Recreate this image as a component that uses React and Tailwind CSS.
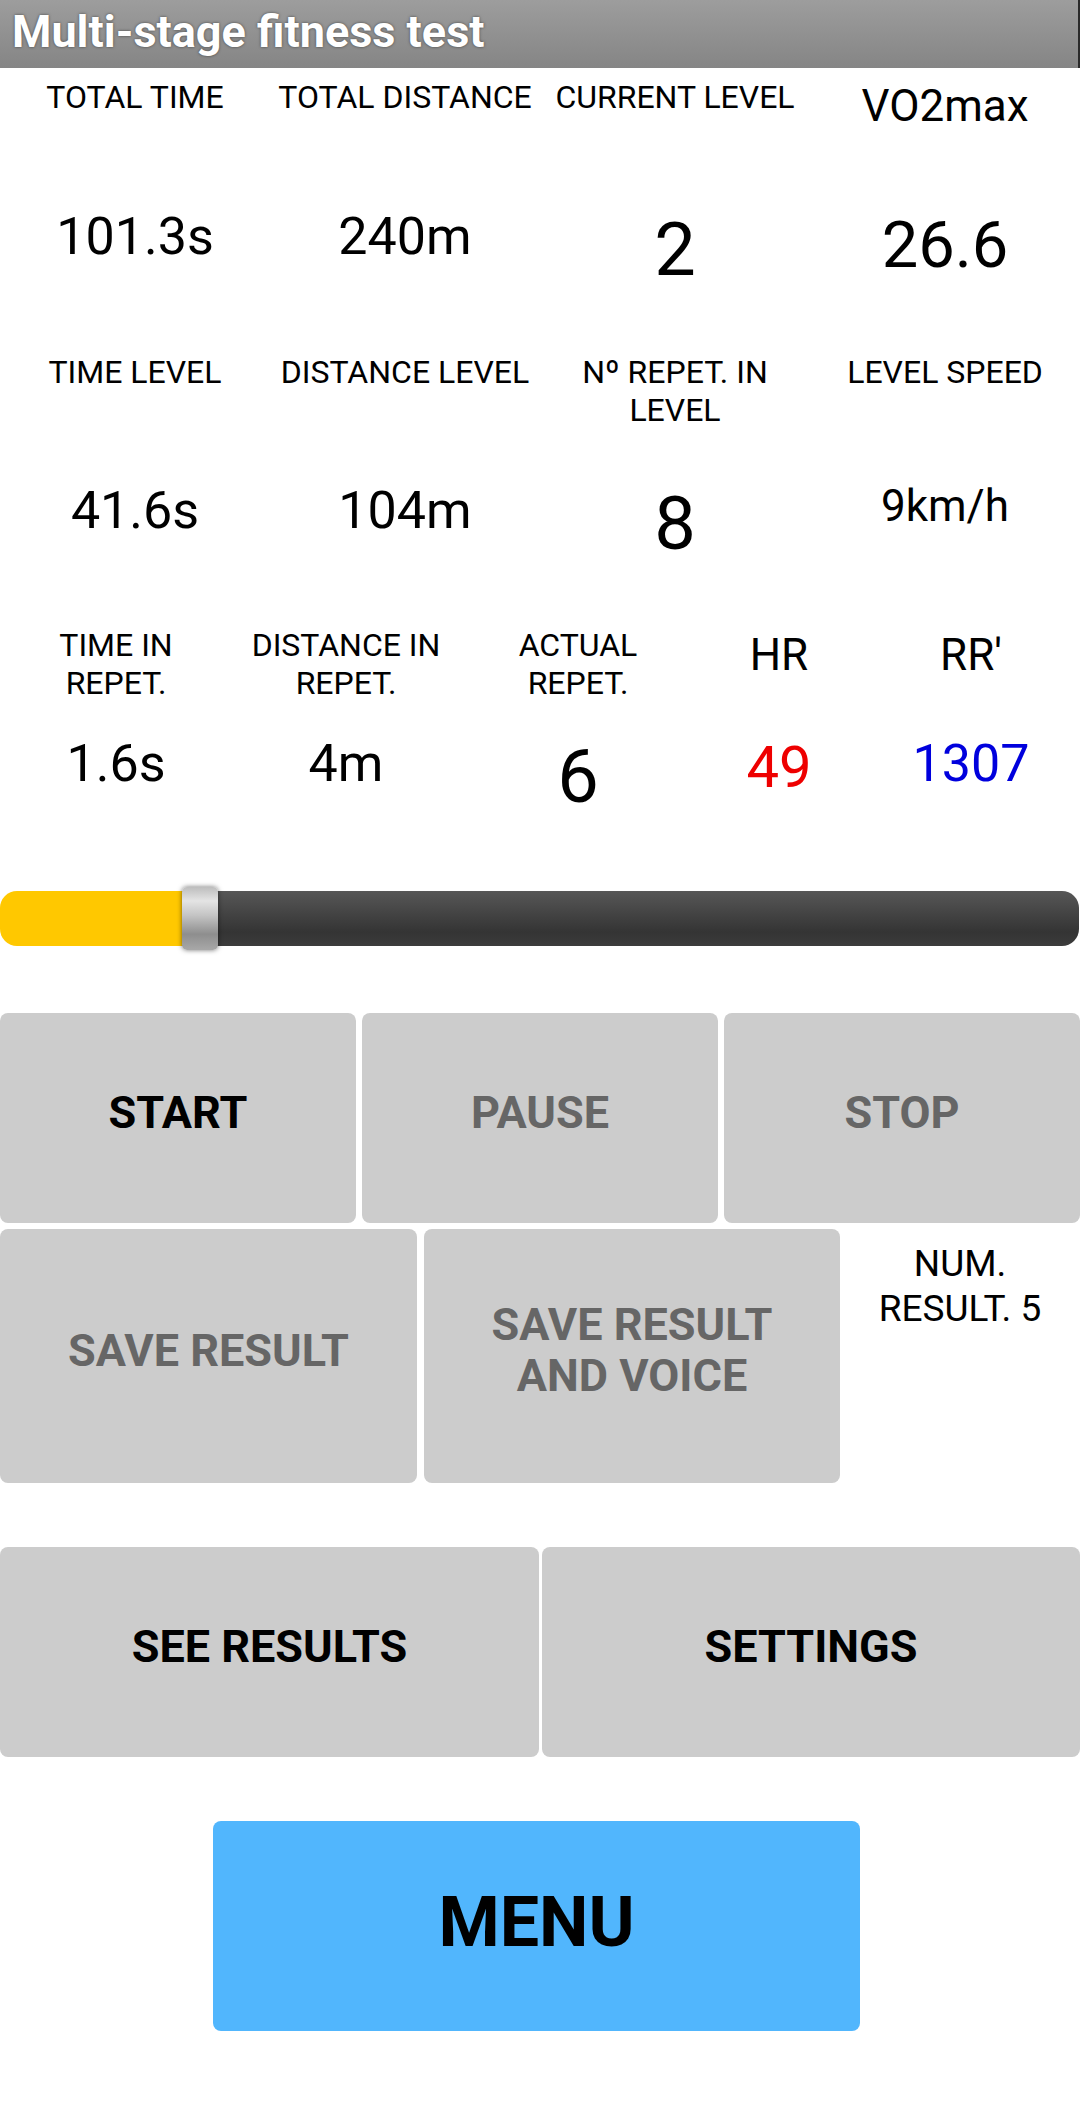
import React from "react";

const LBL = "text-[32px] leading-[38px] text-black text-center";

function Cell({ w, labelH, valueH, label, value }) {
  return (
    <div className={`flex flex-col items-center ${w}`}>
      <div className={`${labelH} w-full flex justify-center`}>{label}</div>
      <div className={`${valueH} w-full flex justify-center`}>{value}</div>
    </div>
  );
}

function Btn({ className, children }) {
  return (
    <div
      className={`rounded-[8px] bg-[#cccccc] flex items-center justify-center text-center text-[45px] leading-[1.13] font-bold pb-[10px] ${className}`}
    >
      {children}
    </div>
  );
}

export default function App() {
  return (
    <div className="w-[1080px] h-[2117px] bg-white font-[Roboto,sans-serif] overflow-hidden">
      <header className="h-[68px] bg-linear-to-b from-[#9d9d9d] to-[#858585] shadow-[inset_-2px_0_0_#2a2a2a] pl-[12px] pt-[6px]">
        <h1 className="text-white font-bold text-[45px] leading-[1.172] [text-shadow:0_0_3px_rgba(0,0,0,0.55)]">
          Multi-stage fitness test
        </h1>
      </header>

      {/* Row 1 */}
      <div className="flex pt-[10px]">
        <Cell
          w="w-[270px]"
          labelH="h-[129px]"
          valueH="h-[146px]"
          label={<div className={LBL}>TOTAL TIME</div>}
          value={<div className="text-[52px] leading-[1.172] text-black">101.3s</div>}
        />
        <Cell
          w="w-[270px]"
          labelH="h-[129px]"
          valueH="h-[146px]"
          label={<div className={LBL}>TOTAL DISTANCE</div>}
          value={<div className="text-[52px] leading-[1.172] text-black">240m</div>}
        />
        <Cell
          w="w-[270px]"
          labelH="h-[129px]"
          valueH="h-[146px]"
          label={<div className={LBL}>CURRENT LEVEL</div>}
          value={<div className="text-[74px] leading-[1.172] text-black">2</div>}
        />
        <Cell
          w="w-[270px]"
          labelH="h-[129px]"
          valueH="h-[146px]"
          label={<div className="text-[44px] leading-[1.172] text-black pt-[3px]">VO2max</div>}
          value={<div className="text-[65px] leading-[1.172] text-black">26.6</div>}
        />
      </div>

      {/* Row 2 */}
      <div className="flex">
        <Cell
          w="w-[270px]"
          labelH="h-[128px]"
          valueH="h-[145px]"
          label={<div className={LBL}>TIME LEVEL</div>}
          value={<div className="text-[52px] leading-[1.172] text-black">41.6s</div>}
        />
        <Cell
          w="w-[270px]"
          labelH="h-[128px]"
          valueH="h-[145px]"
          label={<div className={LBL}>DISTANCE LEVEL</div>}
          value={<div className="text-[52px] leading-[1.172] text-black">104m</div>}
        />
        <Cell
          w="w-[270px]"
          labelH="h-[128px]"
          valueH="h-[145px]"
          label={
            <div className={LBL}>
              Nº REPET. IN
              <br />
              LEVEL
            </div>
          }
          value={<div className="text-[74px] leading-[1.172] text-black">8</div>}
        />
        <Cell
          w="w-[270px]"
          labelH="h-[128px]"
          valueH="h-[145px]"
          label={<div className={LBL}>LEVEL SPEED</div>}
          value={<div className="text-[44px] leading-[1.172] text-black">9km/h</div>}
        />
      </div>

      {/* Row 3 */}
      <div className="flex">
        <Cell
          w="w-[232px]"
          labelH="h-[108px]"
          valueH="h-[157px]"
          label={
            <div className={LBL}>
              TIME IN
              <br />
              REPET.
            </div>
          }
          value={<div className="text-[52px] leading-[1.172] text-black">1.6s</div>}
        />
        <Cell
          w="w-[228px]"
          labelH="h-[108px]"
          valueH="h-[157px]"
          label={
            <div className={LBL}>
              DISTANCE IN
              <br />
              REPET.
            </div>
          }
          value={<div className="text-[52px] leading-[1.172] text-black">4m</div>}
        />
        <Cell
          w="w-[236px]"
          labelH="h-[108px]"
          valueH="h-[157px]"
          label={
            <div className={LBL}>
              ACTUAL
              <br />
              REPET.
            </div>
          }
          value={<div className="text-[74px] leading-[1.172] text-black">6</div>}
        />
        <Cell
          w="w-[166px]"
          labelH="h-[108px]"
          valueH="h-[157px]"
          label={<div className="text-[44px] leading-[1.172] text-black pt-[4px]">HR</div>}
          value={<div className="text-[58px] leading-[1.172] text-[#ee0000]">49</div>}
        />
        <Cell
          w="w-[218px]"
          labelH="h-[108px]"
          valueH="h-[157px]"
          label={<div className="text-[44px] leading-[1.172] text-black pt-[4px]">RR'</div>}
          value={<div className="text-[52px] leading-[1.172] text-[#0000dd]">1307</div>}
        />
      </div>

      {/* Slider */}
      <div className="relative h-[55px] mr-[1px]">
        <div className="flex h-full rounded-[17px] overflow-hidden">
          <div className="w-[182px] bg-[#ffc800]" />
          <div className="flex-1 bg-[linear-gradient(180deg,#575757_0%,#444444_40%,#343434_75%,#3c3c3c_100%)]" />
        </div>
        <div className="absolute left-[182px] top-[-4px] w-[36px] h-[63px] rounded-[5px] bg-[linear-gradient(180deg,#bdbdbd_0%,#e4e4e4_22%,#c4c4c4_45%,#8e8e8e_75%,#a8a8a8_100%)] shadow-[0_0_5px_rgba(0,0,0,0.55)]" />
      </div>

      {/* Buttons row 1 */}
      <div className="mt-[67px] flex gap-[6px] h-[210px]">
        <Btn className="flex-1 text-black">START</Btn>
        <Btn className="flex-1 text-[#666666]">PAUSE</Btn>
        <Btn className="flex-1 text-[#666666]">STOP</Btn>
      </div>

      {/* Buttons row 2 */}
      <div className="mt-[6px] flex h-[254px]">
        <Btn className="w-[417px] text-[#666666]">SAVE RESULT</Btn>
        <Btn className="ml-[7px] w-[416px] text-[#666666]">
          SAVE RESULT
          <br />
          AND VOICE
        </Btn>
        <div className="flex-1 pt-[12px] text-center text-[37px] leading-[45px] text-black">
          NUM.
          <br />
          RESULT. 5
        </div>
      </div>

      {/* Buttons row 3 */}
      <div className="mt-[64px] flex gap-[3px] h-[210px]">
        <Btn className="w-[539px] text-black">SEE RESULTS</Btn>
        <Btn className="flex-1 text-black">SETTINGS</Btn>
      </div>

      {/* Menu */}
      <div className="mt-[64px] ml-[213px] w-[647px] h-[210px] rounded-[8px] bg-[#51b6fd] flex items-center justify-center pb-[8px] text-[70px] font-bold text-black">
        MENU
      </div>
    </div>
  );
}
